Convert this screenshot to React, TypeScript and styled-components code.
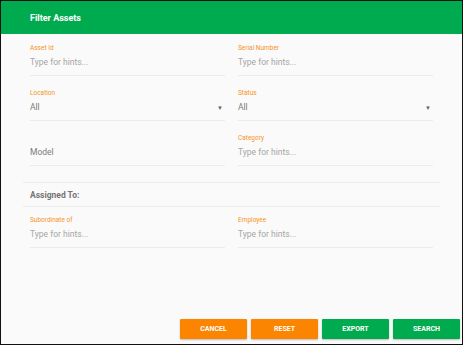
import React from "react";
import styled, { createGlobalStyle } from "styled-components";

const GlobalStyle = createGlobalStyle`
    html, body {
        margin: 0;
        padding: 0;
        background: #fff;
        font-family: Roboto, "Liberation Sans", sans-serif;
    }
`;

const Dialog = styled.div`
    box-sizing: border-box;
    width: 463px;
    height: 345px;
    border: 1px solid #111;
    background-color: #fafafa;
    display: flex;
    flex-direction: column;
`;

const Header = styled.div`
    height: 33px;
    background-color: #00ab4f;
    color: #fff;
    font-size: 9px;
    font-weight: 700;
    display: flex;
    align-items: center;
    padding-left: 29px;
`;

const Body = styled.div`
    flex: 1;
    padding: 8px 22px 0;
    display: flex;
    flex-direction: column;
`;

const Grid = styled.div<{ $offset?: number }>`
    display: grid;
    grid-template-columns: 195px 195px;
    column-gap: 13px;
    row-gap: 11px;
    padding: 0 7px;
    margin-top: ${(p) => p.$offset ?? 0}px;
`;

const Field = styled.div`
    display: flex;
    flex-direction: column;
`;

const Label = styled.div`
    height: 12px;
    line-height: 12px;
    font-size: 6.5px;
    color: #f7941d;
`;

const InputLine = styled.div<{ $muted?: boolean }>`
    display: flex;
    align-items: center;
    justify-content: space-between;
    height: 16px;
    padding-bottom: 5px;
    border-bottom: 1px solid #ececec;
    font-size: 8.5px;
    color: ${(p) => (p.$muted ? "#a6a6a6" : "#7a7a7a")};
`;

const Caret = styled.span`
    font-size: 6px;
    color: #666;
    margin-right: 2px;
`;

const Section = styled.div`
    margin-top: 16px;
    border-top: 1px solid #ececec;
    border-bottom: 1px solid #ececec;
    height: 23px;
    display: flex;
    align-items: center;
    padding-left: 7px;
    font-size: 8.5px;
    font-weight: 700;
    color: #757575;
`;

const Footer = styled.div`
    margin-top: auto;
    display: flex;
    justify-content: flex-end;
    gap: 4px;
    padding: 0 2px 5px 0;
`;

const Button = styled.button<{ $tone: "orange" | "green" }>`
    width: 67px;
    height: 20px;
    border: none;
    border-radius: 1px;
    padding: 0;
    background-color: ${(p) => (p.$tone === "orange" ? "#fb8500" : "#00ab4f")};
    color: #fff;
    font-family: Roboto, "Liberation Sans", sans-serif;
    font-size: 7px;
    font-weight: 700;
    text-transform: uppercase;
    box-shadow: 0 1px 2px rgba(0, 0, 0, 0.25);
`;

type FieldDef = { label?: string; value: string; select?: boolean; muted?: boolean };

const topFields: FieldDef[] = [
    { label: "Asset Id", value: "Type for hints...", muted: true },
    { label: "Serial Number", value: "Type for hints...", muted: true },
    { label: "Location", value: "All", select: true },
    { label: "Status", value: "All", select: true },
    { value: "Model" },
    { label: "Category", value: "Type for hints...", muted: true },
];

const assignFields: FieldDef[] = [
    { label: "Subordinate of", value: "Type for hints...", muted: true },
    { label: "Employee", value: "Type for hints...", muted: true },
];

function FormField({ label, value, select, muted }: FieldDef) {
    return (
        <Field>
            <Label>{label ?? ""}</Label>
            <InputLine $muted={muted}>
                <span>{value}</span>
                {select && <Caret>▼</Caret>}
            </InputLine>
        </Field>
    );
}

export default function App() {
    return (
        <>
            <GlobalStyle />
            <Dialog>
                <Header>Filter Assets</Header>
                <Body>
                    <Grid>
                        {topFields.map((f, i) => (
                            <FormField key={i} {...f} />
                        ))}
                    </Grid>
                    <Section>Assigned To:</Section>
                    <Grid $offset={7}>
                        {assignFields.map((f, i) => (
                            <FormField key={i} {...f} />
                        ))}
                    </Grid>
                </Body>
                <Footer>
                    <Button $tone="orange">Cancel</Button>
                    <Button $tone="orange">Reset</Button>
                    <Button $tone="green">Export</Button>
                    <Button $tone="green">Search</Button>
                </Footer>
            </Dialog>
        </>
    );
}
